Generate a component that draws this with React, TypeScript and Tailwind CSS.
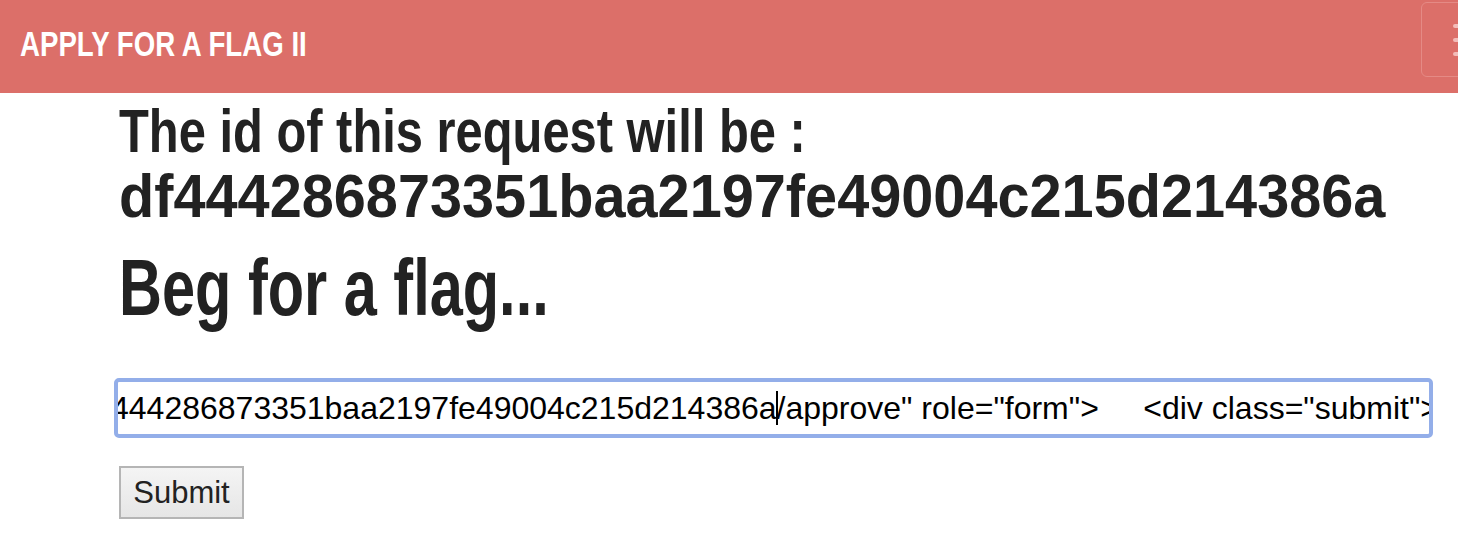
import React from 'react';

const headFont = {
  fontFamily: '"Liberation Sans", Arial, sans-serif',
};

const bodyFont = { fontFamily: '"Liberation Sans", Arial, sans-serif' };

export default function App() {
  return (
    <div className="min-h-[546px] w-[1458px] overflow-hidden bg-white text-[#222]">
      <nav className="flex h-[93px] items-start justify-between bg-[#dc6f69]">
        <div className="pl-[20px] pt-[24px]">
          <div
            className="origin-left scale-x-[0.79] whitespace-nowrap text-[35px] font-bold leading-[40px] text-white"
            style={headFont}
          >
            APPLY FOR A FLAG II
          </div>
        </div>
        <div className="mt-[2px] mr-[-40px] flex h-[75px] w-[77px] flex-col gap-[10px] rounded-[6px] border border-[#e58a85] pl-[31px] pt-[21px]">
          <span className="block h-[4px] w-[30px] rounded-sm bg-[#f3bcb9]" />
          <span className="block h-[4px] w-[30px] rounded-sm bg-[#f3bcb9]" />
          <span className="block h-[4px] w-[30px] rounded-sm bg-[#f3bcb9]" />
        </div>
      </nav>

      <main className="pl-[119px]">
        <h2 className="pt-[5px] text-[62px] font-bold leading-[65px]" style={headFont}>
          <div className="origin-left scale-x-[0.788] whitespace-nowrap">The id of this request will be :</div>
          <div className="origin-left scale-x-[0.93] whitespace-nowrap">df444286873351baa2197fe49004c215d214386a</div>
        </h2>
        <h1 className="mt-[15px] text-[79px] font-bold leading-[90px]" style={headFont}>
          <div className="origin-left scale-x-[0.753] whitespace-nowrap">Beg for a flag...</div>
        </h1>

        <div className="mt-[45px] ml-[-5px] h-[60px] w-[1319px] overflow-hidden rounded-[5px] border-[4px] border-[#93aee9] bg-white">
          <div className="ml-[-7px] whitespace-pre text-[32px] leading-[52px] text-black" style={bodyFont}>
            444286873351baa2197fe49004c215d214386a
            <span className="mx-[-1px] inline-block h-[34px] w-[2px] translate-y-[6px] bg-black" />
            {'/approve" role="form">     <div class="submit">'}
          </div>
        </div>

        <button
          className="mt-[28px] h-[53px] w-[125px] border-2 border-[#b5b5b5] bg-gradient-to-b from-[#f4f4f4] to-[#e6e6e6] text-[31px] leading-[49px] text-[#222]"
          style={bodyFont}
        >
          Submit
        </button>
      </main>
    </div>
  );
}
